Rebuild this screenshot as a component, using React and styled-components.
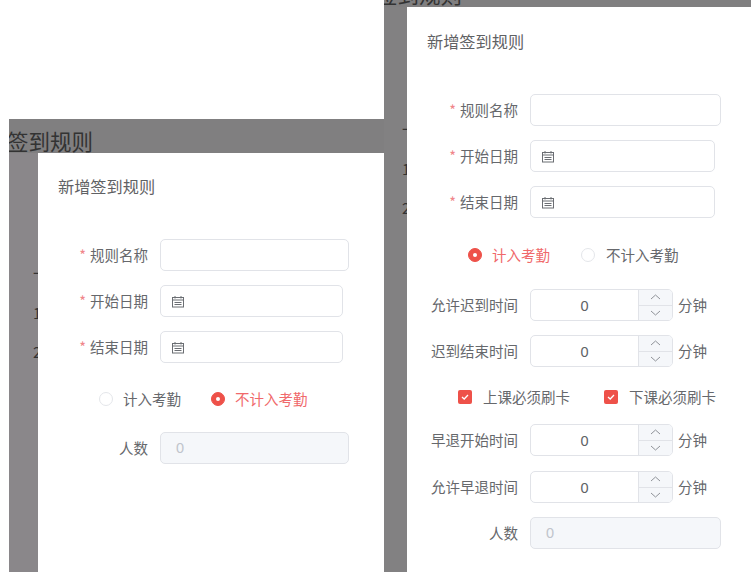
import styled, { createGlobalStyle } from 'styled-components'

const GlobalStyle = createGlobalStyle`
  html, body {
    margin: 0;
    padding: 0;
    background: #fff;
  }

  body {
    font-family: "Noto Sans CJK SC", "Liberation Sans", sans-serif;
    color: #606266;
  }
`

const Page = styled.div`
  display: flex;
  width: 751px;
  height: 572px;
  overflow: hidden;
  background: #fff;
`

const LeftShot = styled.div`
  width: 384px;
  padding: 119px 0 0 9px;
  box-sizing: border-box;
`

const RightShot = styled.div`
  flex: 1;
`

const Backdrop = styled.div`
  position: relative;
  height: 100%;
  overflow: hidden;
  background: ${p => p.$shade};
`

const Band = styled.div`
  height: ${p => p.$height}px;
  background: #807f80;
  overflow: hidden;
`

const Heading = styled.div`
  color: #333;
  font-size: 21.5px;
  line-height: 30px;
  white-space: nowrap;
  margin: ${p => p.$top}px 0 0 ${p => p.$left}px;
`

const Behind = styled.div`
  padding: ${p => p.$top}px 0 0 ${p => p.$left}px;
  color: #333;
  font-size: 15px;
  line-height: 20px;
  display: flex;
  flex-direction: column;
  gap: 19.5px;
`

const Modal = styled.div`
  position: absolute;
  top: ${p => p.$top}px;
  left: ${p => p.$left}px;
  right: 0;
  bottom: 0;
  background: #fff;
  padding: ${p => p.$titleTop}px 0 0 20px;
`

const Title = styled.div`
  font-size: 16.2px;
  line-height: 20px;
  color: #5f6164;
  margin-bottom: ${p => p.$gap}px;
`

const Form = styled.div`
  margin-left: -20px;
`

const Row = styled.div`
  display: flex;
  align-items: center;
  height: 32px;
  margin-top: ${p => p.$top ?? 14}px;
`

const Label = styled.div`
  width: ${p => p.$width}px;
  margin-right: 12px;
  padding-bottom: 1px;
  text-align: right;
  font-size: 14.5px;
  color: #66686c;
  white-space: nowrap;
  flex: none;
`

const Star = styled.span`
  color: #f0868a;
  margin-right: 4px;
`

const Field = styled.div`
  display: flex;
  align-items: center;
  width: ${p => p.$width}px;
  height: 32px;
  box-sizing: border-box;
  padding-left: ${p => p.$pad}px;
  border: 1px solid #e1e3e8;
  border-radius: 5px;
  background: ${p => (p.$disabled ? '#f5f7fa' : '#fff')};
  color: #c0c4cc;
  font-size: 14.5px;
  font-family: "Liberation Sans", sans-serif;
`

const NumberBox = styled.div`
  display: flex;
  width: 143px;
  height: 32px;
  box-sizing: border-box;
  border: 1px solid #e1e3e8;
  border-radius: 5px;
  overflow: hidden;
`

const NumberValue = styled.div`
  flex: 1;
  text-align: center;
  line-height: 33px;
  font-size: 14.5px;
  color: #606266;
  font-family: "Liberation Sans", sans-serif;
`

const Stepper = styled.div`
  width: 33px;
  display: flex;
  flex-direction: column;
  background: #f5f7fa;
  border-left: 1px solid #e1e3e8;
`

const StepButton = styled.div`
  flex: 1;
  display: flex;
  align-items: center;
  justify-content: center;

  & + & {
    border-top: 1px solid #e1e3e8;
  }
`

const Unit = styled.div`
  margin-left: 5px;
  padding-bottom: 1px;
  font-size: 14.5px;
  color: #66686c;
`

const ChoiceRow = styled.div`
  display: flex;
  align-items: center;
  height: 32px;
  margin-top: ${p => p.$top}px;
  padding-left: ${p => p.$left}px;
`

const Choice = styled.div`
  display: flex;
  align-items: center;
  width: ${p => p.$width}px;
  flex: none;
  gap: ${p => p.$gap}px;
  font-size: 14.5px;
  line-height: 20px;
  white-space: nowrap;
  color: ${p => (p.$on ? '#f0696b' : '#66686c')};
`

const Radio = styled.span`
  width: 14px;
  height: 14px;
  box-sizing: border-box;
  flex: none;
  border-radius: 50%;
  border: 1px solid ${p => (p.$on ? '#ee5149' : '#e4e6ea')};
  background: ${p => (p.$on ? '#ee5149' : '#fff')};
  display: flex;
  align-items: center;
  justify-content: center;

  &::after {
    content: '';
    width: 4px;
    height: 4px;
    border-radius: 50%;
    background: ${p => (p.$on ? '#fff' : 'transparent')};
  }
`

const CheckBox = styled.span`
  width: 14px;
  height: 14px;
  flex: none;
  border-radius: 2px;
  background: #ee5149;
  display: flex;
  align-items: center;
  justify-content: center;
`

function CalendarIcon() {
  return (
    <svg width="12" height="13" viewBox="0 0 12 13" fill="none" stroke="#6b6e73" strokeWidth="1">
      <rect x="0.5" y="2.5" width="11" height="9.5" />
      <path d="M0.5 5h11M3 1v2.5M9 1v2.5M2.5 7.5h7M2.5 9.5h7" />
    </svg>
  )
}

function Chevron({ up }) {
  return (
    <svg width="11" height="6" viewBox="0 0 11 6" fill="none" stroke="#8f9299" strokeWidth="1">
      <path d={up ? 'M1 5l4.5-4L10 5' : 'M1 1l4.5 4L10 1'} />
    </svg>
  )
}

function CheckMark() {
  return (
    <svg width="10" height="8" viewBox="0 0 10 8" fill="none" stroke="#fff" strokeWidth="1.3">
      <path d="M2 4l2.2 2L8 2" />
    </svg>
  )
}

function FormLabel({ width, required, children }) {
  return (
    <Label $width={width}>
      {required && <Star>*</Star>}
      {children}
    </Label>
  )
}

function DateRow({ labelWidth, fieldWidth, children }) {
  return (
    <Row>
      <FormLabel width={labelWidth} required>
        {children}
      </FormLabel>
      <Field $width={fieldWidth} $pad={11}>
        <CalendarIcon />
      </Field>
    </Row>
  )
}

function NumberRow({ labelWidth, top, children }) {
  return (
    <Row $top={top}>
      <FormLabel width={labelWidth}>{children}</FormLabel>
      <NumberBox>
        <NumberValue>0</NumberValue>
        <Stepper>
          <StepButton>
            <Chevron up />
          </StepButton>
          <StepButton>
            <Chevron />
          </StepButton>
        </Stepper>
      </NumberBox>
      <Unit>分钟</Unit>
    </Row>
  )
}

function App() {
  return (
    <>
      <GlobalStyle />
      <Page>
        <LeftShot>
          <Backdrop $shade="#8a878a">
            <Band $height={34}>
              <Heading $top={7} $left={-2}>
                签到规则
              </Heading>
            </Band>
            <Behind $top={110} $left={24}>
              <span>一</span>
              <span>1</span>
              <span>2</span>
            </Behind>
            <Modal $top={34} $left={29} $titleTop={23}>
              <Title $gap={43}>新增签到规则</Title>
              <Form>
                <Row $top={0}>
                  <FormLabel width={110} required>
                    规则名称
                  </FormLabel>
                  <Field $width={189} />
                </Row>
                <DateRow labelWidth={110} fieldWidth={183}>
                  开始日期
                </DateRow>
                <DateRow labelWidth={110} fieldWidth={183}>
                  结束日期
                </DateRow>
                <ChoiceRow $top={20} $left={61}>
                  <Choice $width={112} $gap={10}>
                    <Radio />
                    计入考勤
                  </Choice>
                  <Choice $width={112} $gap={10} $on>
                    <Radio $on />
                    不计入考勤
                  </Choice>
                </ChoiceRow>
                <Row $top={17}>
                  <FormLabel width={110}>人数</FormLabel>
                  <Field $width={189} $pad={15} $disabled>
                    0
                  </Field>
                </Row>
              </Form>
            </Modal>
          </Backdrop>
        </LeftShot>
        <RightShot>
          <Backdrop $shade="#828182">
            <Band $height={7}>
              <Heading $top={-21} $left={-8}>
                签到规则
              </Heading>
            </Band>
            <Behind $top={112} $left={18}>
              <span>一</span>
              <span>1</span>
              <span>2</span>
            </Behind>
            <Modal $top={7} $left={23} $titleTop={24}>
              <Title $gap={43}>新增签到规则</Title>
              <Form>
                <Row $top={0}>
                  <FormLabel width={111} required>
                    规则名称
                  </FormLabel>
                  <Field $width={191} />
                </Row>
                <DateRow labelWidth={111} fieldWidth={185}>
                  开始日期
                </DateRow>
                <DateRow labelWidth={111} fieldWidth={185}>
                  结束日期
                </DateRow>
                <ChoiceRow $top={21} $left={61}>
                  <Choice $width={113} $gap={10} $on>
                    <Radio $on />
                    计入考勤
                  </Choice>
                  <Choice $width={113} $gap={11}>
                    <Radio />
                    不计入考勤
                  </Choice>
                </ChoiceRow>
                <NumberRow labelWidth={111} top={18}>
                  允许迟到时间
                </NumberRow>
                <NumberRow labelWidth={111}>迟到结束时间</NumberRow>
                <ChoiceRow $top={14} $left={51}>
                  <Choice $width={146} $gap={11}>
                    <CheckBox>
                      <CheckMark />
                    </CheckBox>
                    上课必须刷卡
                  </Choice>
                  <Choice $width={120} $gap={11}>
                    <CheckBox>
                      <CheckMark />
                    </CheckBox>
                    下课必须刷卡
                  </Choice>
                </ChoiceRow>
                <NumberRow labelWidth={111} top={11}>
                  早退开始时间
                </NumberRow>
                <NumberRow labelWidth={111} top={15}>
                  允许早退时间
                </NumberRow>
                <Row>
                  <FormLabel width={111}>人数</FormLabel>
                  <Field $width={191} $pad={15} $disabled>
                    0
                  </Field>
                </Row>
              </Form>
            </Modal>
          </Backdrop>
        </RightShot>
      </Page>
    </>
  )
}

export default App
